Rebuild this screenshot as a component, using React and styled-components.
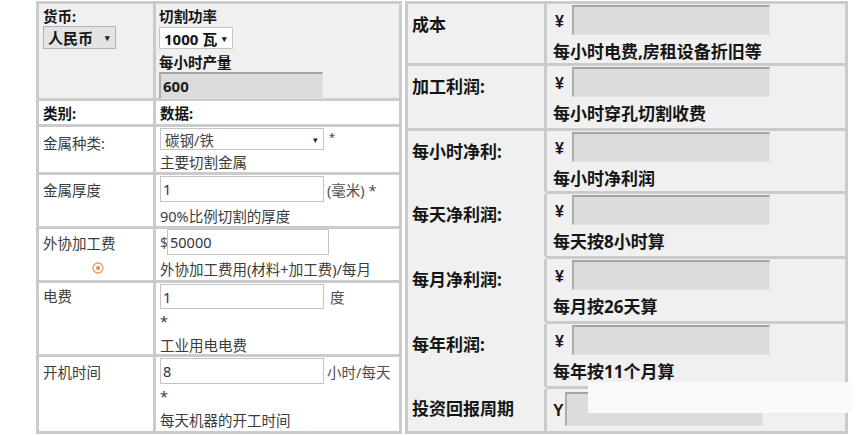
import React from 'react';
import styled, { createGlobalStyle } from 'styled-components';

const GlobalStyle = createGlobalStyle`
  html, body {
    margin: 0;
    padding: 0;
    background: #ffffff;
  }
  body {
    font-family: "Noto Sans", "Noto Sans CJK SC", sans-serif;
    color: #222;
  }
`;

const line = '#cbcbcb';
const font = '"Noto Sans", "Noto Sans CJK SC", sans-serif';

const Page = styled.div`
  position: relative;
  display: flex;
  align-items: flex-start;
  gap: 3px;
  width: 860px;
  height: 436px;
  padding: 1px 0 0 36px;
  box-sizing: border-box;
  overflow: hidden;
`;

const Table = styled.div`
  display: grid;
  grid-template-columns: ${(p) => p.$cols};
  grid-template-rows: ${(p) => p.$rows};
  border-top: 3px solid ${line};
  border-left: 3px solid ${line};
`;

const Cell = styled.div`
  box-sizing: border-box;
  min-width: 0;
  background: ${(p) => p.$bg || '#ffffff'};
  border-right: 3px solid ${line};
  border-bottom: 3px solid ${(p) => (p.$open ? 'transparent' : line)};
  padding: ${(p) => p.$pad || '0'};
`;

const Heading = styled.div`
  font-size: 14.5px;
  font-weight: 700;
  line-height: 20px;
  color: #151515;
  margin-top: ${(p) => p.$gap || 0}px;
`;

const Label = styled.div`
  font-size: 14.5px;
  line-height: 20px;
  color: #3c3c3c;
`;

const Hint = styled.div`
  font-size: 14.5px;
  line-height: 24px;
  color: #3c3c3c;
  margin-top: ${(p) => p.$gap || 0}px;
`;

const Line = styled.div`
  display: flex;
  align-items: center;
  gap: ${(p) => (p.$gap === undefined ? 3 : p.$gap)}px;
`;

const Unit = styled.span`
  font-size: 14.5px;
  color: #505050;
  white-space: nowrap;
`;

const Star = styled.span`
  align-self: flex-start;
  font-size: 11px;
  line-height: 14px;
  color: #444;
  margin-top: 2px;
`;

const Field = styled.input`
  box-sizing: border-box;
  width: ${(p) => p.$w || 164}px;
  height: ${(p) => p.$h || 26}px;
  margin: 0;
  padding: 0 2px;
  border: 1px solid #c4c4c4;
  background: #ffffff;
  font: 14.5px ${font};
  color: #333;
  outline: none;
`;

const ReadOut = styled(Field)`
  background: #dcdcdc;
  border-top: 2px solid #a3a3a3;
  border-left: 2px solid #adadad;
  border-right: 1px solid #e2e2e2;
  border-bottom: 1px solid #e2e2e2;
  font-weight: 700;
  font-size: 15px;
  color: #1e1e1e;
`;

const Select = styled.div`
  box-sizing: border-box;
  display: flex;
  align-items: center;
  justify-content: space-between;
  width: ${(p) => p.$w}px;
  height: ${(p) => p.$h || 22}px;
  padding: 0 5px 0 4px;
  border: 1px solid ${(p) => (p.$bg ? '#b3b3b3' : '#c4c4c4')};
  background: ${(p) => p.$bg || '#ffffff'};
  font-size: ${(p) => (p.$bold ? '15px' : '14.5px')};
  font-weight: ${(p) => (p.$bold ? 700 : 400)};
  color: ${(p) => (p.$bold ? '#151515' : '#444')};
  white-space: nowrap;
`;

const Caret = styled.span`
  font-size: 9px;
  color: #222;
`;

const IconSlot = styled.div`
  display: flex;
  justify-content: center;
  margin-top: 9px;
`;

const Title = styled.div`
  font-size: 17px;
  font-weight: 700;
  line-height: 20px;
  color: #151515;
  white-space: nowrap;
`;

const Sign = styled.span`
  display: inline-block;
  width: ${(p) => p.$w || 19}px;
  padding-left: ${(p) => p.$indent || 0}px;
  margin-top: 4px;
  box-sizing: border-box;
  font-family: "Liberation Sans", "Noto Sans", sans-serif;
  font-size: 16px;
  line-height: 1;
  font-weight: 700;
  color: #151515;
`;

const Note = styled.div`
  font-size: 17px;
  font-weight: 700;
  line-height: 24px;
  margin-top: 5px;
  color: #151515;
  white-space: nowrap;
`;

const Redaction = styled.div`
  position: absolute;
  left: 588px;
  top: 382px;
  width: 265px;
  height: 31px;
  background: #fafafa;
`;

const TargetIcon = () => (
  <svg width="12" height="12" viewBox="0 0 12 12">
    <circle cx="6" cy="6" r="5" fill="#fff" stroke="#e39a5c" strokeWidth="1.3" />
    <circle cx="6" cy="6" r="2" fill="#df8a4e" />
  </svg>
);

const results = [
  { title: '成本', note: '每小时电费,房租设备折旧等' },
  { title: '加工利润:', note: '每小时穿孔切割收费' },
  { title: '每小时净利:', note: '每小时净利润', open: true },
  { title: '每天净利润:', note: '每天按8小时算', open: true },
  { title: '每月净利润:', note: '每月按26天算', open: true },
  { title: '每年利润:', note: '每年按11个月算', open: true },
];

const gray = '#f0f0f0';

const App = () => {
  return (
    <>
      <GlobalStyle />
      <Page>
        <Table $cols="117px 246px" $rows="97px 26px 48px 54px 54px 74px 77px">
          <Cell $bg={gray} $pad="2px 0 0 4px">
            <Heading>货币:</Heading>
            <Select $w={73} $h={23} $bg="#e3e3e3" $bold>
              人民币 <Caret>▾</Caret>
            </Select>
          </Cell>
          <Cell $bg={gray} $pad="2px 0 0 3px">
            <Heading>切割功率</Heading>
            <Select $w={74} $bold style={{ marginTop: 1 }}>
              1000 瓦 <Caret>▾</Caret>
            </Select>
            <Heading $gap={3}>每小时产量</Heading>
            <ReadOut $w={164} $h={27} value="600" readOnly />
          </Cell>

          <Cell $pad="2px 0 0 4px">
            <Heading>类别:</Heading>
          </Cell>
          <Cell $pad="2px 0 0 4px">
            <Heading>数据:</Heading>
          </Cell>

          <Cell $pad="6px 0 0 4px">
            <Label>金属种类:</Label>
          </Cell>
          <Cell $pad="1px 0 0 4px">
            <Line $gap={5}>
              <Select $w={164}>
                碳钢/铁 <Caret>▾</Caret>
              </Select>
              <Star>*</Star>
            </Line>
            <Hint>主要切割金属</Hint>
          </Cell>

          <Cell $pad="5px 0 0 4px">
            <Label>金属厚度</Label>
          </Cell>
          <Cell $pad="1px 0 0 4px">
            <Line>
              <Field value="1" readOnly />
              <Unit>(毫米) *</Unit>
            </Line>
            <Hint $gap={2}>90%比例切割的厚度</Hint>
          </Cell>

          <Cell $pad="4px 0 0 4px">
            <Label>外协加工费</Label>
            <IconSlot>
              <TargetIcon />
            </IconSlot>
          </Cell>
          <Cell $pad="0 0 0 4px">
            <Line $gap={0}>
              <Unit style={{ width: 7 }}>$</Unit>
              <Field $w={162} value="50000" readOnly />
            </Line>
            <Hint $gap={2}>外协加工费用(材料+加工费)/每月</Hint>
          </Cell>

          <Cell $pad="3px 0 0 4px">
            <Label>电费</Label>
          </Cell>
          <Cell $pad="1px 0 0 4px">
            <Line $gap={6}>
              <Field $h={25} value="1" readOnly />
              <Unit>度</Unit>
            </Line>
            <Hint>*</Hint>
            <Hint>工业用电电费</Hint>
          </Cell>

          <Cell $pad="5px 0 0 4px">
            <Label>开机时间</Label>
          </Cell>
          <Cell $pad="1px 0 0 4px">
            <Line>
              <Field value="8" readOnly />
              <Unit>小时/每天</Unit>
            </Line>
            <Hint>*</Hint>
            <Hint>每天机器的开工时间</Hint>
          </Cell>
        </Table>

        <Table $cols="139px 301px" $rows="62px 65px 63px 65px 65px 65px 45px">
          {results.map((r) => (
            <React.Fragment key={r.title}>
              <Cell $bg={gray} $open={r.open} $pad="11px 0 0 4px">
                <Title>{r.title}</Title>
              </Cell>
              <Cell $bg={gray} $pad="1px 0 0 6px">
                <Line $gap={0}>
                  <Sign $indent={2}>¥</Sign>
                  <ReadOut $w={198} $h={30} readOnly />
                </Line>
                <Note>{r.note}</Note>
              </Cell>
            </React.Fragment>
          ))}
          <Cell $bg={gray} $pad="10px 0 0 4px">
            <Title>投资回报周期</Title>
          </Cell>
          <Cell $bg={gray} $pad="3px 0 0 6px">
            <Line $gap={0}>
              <Sign $w={12}>Y</Sign>
              <ReadOut $w={198} $h={34} readOnly />
            </Line>
          </Cell>
        </Table>

        <Redaction />
      </Page>
    </>
  );
};

export default App;
